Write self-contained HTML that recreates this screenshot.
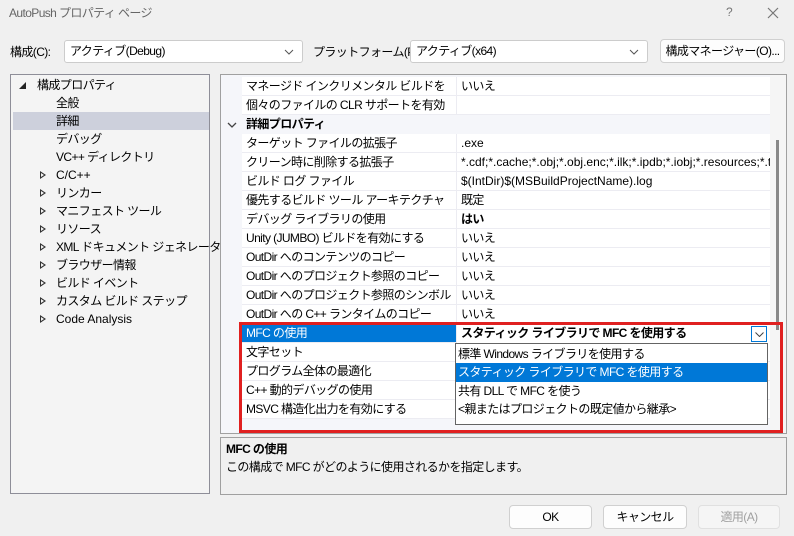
<!DOCTYPE html>
<html><head><meta charset="utf-8"><style>
*{box-sizing:border-box;margin:0;padding:0}
body{width:794px;height:536px;background:#f0f0f0;font-family:"Liberation Sans","Noto Sans CJK JP",sans-serif;font-size:12px;letter-spacing:-0.6px;color:#000;position:relative;overflow:hidden;line-height:16px}
.a{position:absolute;white-space:nowrap}
.combo{position:absolute;background:#fff;border:1px solid #ccc;border-radius:3px;height:23px;line-height:21px;padding-left:5px}
.chev{position:absolute;right:8px;top:8px}
.btn{position:absolute;background:#fdfdfd;border:1px solid #d0d0d0;border-radius:4px;text-align:center;line-height:22px;height:24px}
.tree div{position:absolute;left:0;white-space:nowrap;height:18px;line-height:18px}
.row{position:absolute;left:242px;width:528px;height:19px;border-bottom:1px solid #ececf2;line-height:18px;background:#fff}
.row .n{position:absolute;left:4px;width:210px;overflow:hidden}
.row .v{position:absolute;left:214px;border-left:1px solid #ececf2;padding-left:4px;width:314px;height:19px;overflow:hidden}
.t{position:absolute;left:29px;top:5px;width:0;height:0;border-left:6px solid #333;border-top:4px solid transparent;border-bottom:4px solid transparent}
.t::after{content:"";position:absolute;left:-5px;top:-2px;border-left:3px solid #f4f4f4;border-top:2px solid transparent;border-bottom:2px solid transparent}
.l{letter-spacing:0}
</style></head><body>
<div class="a" style="left:9px;top:5px;color:#666;font-size:12px">AutoPush プロパティ ページ</div>
<div class="a" style="left:726px;top:4px;color:#777">?</div>
<svg class="a" style="left:767px;top:7px" width="12" height="12"><path d="M1 1L11 11M11 1L1 11" stroke="#777" stroke-width="1.2"/></svg>

<div class="a" style="left:10px;top:44px">構成(C):</div>
<div class="combo" style="left:64px;top:40px;width:239px">アクティブ(Debug)<svg class="chev" width="10" height="6"><path d="M1 1L5 5L9 1" fill="none" stroke="#555"/></svg></div>
<div class="a" style="left:313px;top:44px">プラットフォーム(P):</div>
<div class="combo" style="left:410px;top:40px;width:238px">アクティブ(x64)<svg class="chev" width="10" height="6"><path d="M1 1L5 5L9 1" fill="none" stroke="#555"/></svg></div>
<div class="btn" style="left:660px;top:39px;width:125px">構成マネージャー(O)...</div>

<div class="a tree" style="left:10px;top:74px;width:200px;height:420px;background:#f4f4f4;border:1px solid #8e8e98">
<svg style="position:absolute;left:8px;top:7px" width="7" height="7"><path d="M7 0L7 7L0 7Z" fill="#222"/></svg><div style="top:1px;left:26px">構成プロパティ</div>
<div style="top:19px;left:45px">全般</div>
<div style="top:37px;left:2px;width:196px;background:#cdd0dc;padding-left:43px">詳細</div>
<div style="top:55px;left:45px">デバッグ</div>
<div style="top:73px;left:45px">VC++ ディレクトリ</div>
<div style="top:91px;left:0;width:200px"><span class="t"></span><span class="l" style="position:absolute;left:45px">C/C++</span></div>
<div style="top:109px;width:200px"><span class="t"></span><span style="position:absolute;left:45px">リンカー</span></div>
<div style="top:127px;width:200px"><span class="t"></span><span style="position:absolute;left:45px">マニフェスト ツール</span></div>
<div style="top:145px;width:200px"><span class="t"></span><span style="position:absolute;left:45px">リソース</span></div>
<div style="top:163px;width:200px"><span class="t"></span><span style="position:absolute;left:45px">XML ドキュメント ジェネレーター</span></div>
<div style="top:181px;width:200px"><span class="t"></span><span style="position:absolute;left:45px">ブラウザー情報</span></div>
<div style="top:199px;width:200px"><span class="t"></span><span style="position:absolute;left:45px">ビルド イベント</span></div>
<div style="top:217px;width:200px"><span class="t"></span><span style="position:absolute;left:45px">カスタム ビルド ステップ</span></div>
<div style="top:235px;width:200px"><span class="t"></span><span class="l" style="position:absolute;left:45px">Code Analysis</span></div>
</div>

<div class="a" style="left:220px;top:74px;width:567px;height:360px;background:#f5f6fa;border:1px solid #a0a0a0"></div>
<div class="a" style="left:770px;top:75px;width:16px;height:358px;background:#f5f5f5"></div>
<div class="a" style="left:776px;top:140px;width:3px;height:190px;background:#888"></div>

<div class="row" style="top:77px"><span class="n">マネージド インクリメンタル ビルドを有効にする</span><span class="v">いいえ</span></div>
<div class="row" style="top:96px"><span class="n">個々のファイルの CLR サポートを有効にする</span><span class="v"></span></div>
<div class="a" style="left:221px;top:115px;width:549px;height:19px;background:#f5f6fa;line-height:19px;font-weight:bold"><svg style="position:absolute;left:6px;top:7px" width="10" height="6"><path d="M1 1L5 5L9 1" fill="none" stroke="#444" stroke-width="1.3"/></svg><span style="position:absolute;left:25px">詳細プロパティ</span></div>
<div class="row" style="top:134px"><span class="n">ターゲット ファイルの拡張子</span><span class="v l">.exe</span></div>
<div class="row" style="top:153px"><span class="n">クリーン時に削除する拡張子</span><span class="v l">*.cdf;*.cache;*.obj;*.obj.enc;*.ilk;*.ipdb;*.iobj;*.resources;*.tlb</span></div>
<div class="row" style="top:172px"><span class="n">ビルド ログ ファイル</span><span class="v l">$(IntDir)$(MSBuildProjectName).log</span></div>
<div class="row" style="top:191px"><span class="n">優先するビルド ツール アーキテクチャ</span><span class="v">既定</span></div>
<div class="row" style="top:210px"><span class="n">デバッグ ライブラリの使用</span><span class="v" style="font-weight:bold">はい</span></div>
<div class="row" style="top:229px"><span class="n">Unity (JUMBO) ビルドを有効にする</span><span class="v">いいえ</span></div>
<div class="row" style="top:248px"><span class="n">OutDir へのコンテンツのコピー</span><span class="v">いいえ</span></div>
<div class="row" style="top:267px"><span class="n">OutDir へのプロジェクト参照のコピー</span><span class="v">いいえ</span></div>
<div class="row" style="top:286px"><span class="n">OutDir へのプロジェクト参照のシンボルのコピー</span><span class="v">いいえ</span></div>
<div class="row" style="top:305px"><span class="n">OutDir への C++ ランタイムのコピー</span><span class="v">いいえ</span></div>
<div class="row" style="top:324px;background:#0078d7;color:#fff"><span class="n">MFC の使用</span><span class="v" style="background:#fff;color:#000;font-weight:bold">スタティック ライブラリで MFC を使用する</span></div>
<div class="a" style="left:751px;top:326px;width:16px;height:16px;border:1px solid #0078d7;background:#fff"><svg style="position:absolute;left:3px;top:5px" width="9" height="5"><path d="M0.5 0.5L4.5 4.5L8.5 0.5" fill="none" stroke="#444"/></svg></div>
<div class="row" style="top:343px"><span class="n">文字セット</span></div>
<div class="row" style="top:362px"><span class="n">プログラム全体の最適化</span></div>
<div class="row" style="top:381px"><span class="n">C++ 動的デバッグの使用</span></div>
<div class="row" style="top:400px"><span class="n">MSVC 構造化出力を有効にする</span></div>

<div class="a" style="left:455px;top:343px;width:313px;height:82px;background:#fff;border:1px solid #646464;line-height:18px">
<div style="position:absolute;left:2px;top:1px">標準 Windows ライブラリを使用する</div>
<div style="position:absolute;left:0;top:19px;width:311px;height:19px;background:#0078d7;color:#fff;padding-left:2px">スタティック ライブラリで MFC を使用する</div>
<div style="position:absolute;left:2px;top:38px">共有 DLL で MFC を使う</div>
<div style="position:absolute;left:2px;top:56px">&lt;親またはプロジェクトの既定値から継承&gt;</div>
</div>

<div class="a" style="left:239px;top:322px;width:544px;height:111px;border:3px solid #e02020"></div>

<div class="a" style="left:220px;top:437px;width:567px;height:58px;background:#f0f0f0;border:1px solid #a0a0a0">
<div style="position:absolute;left:5px;top:3px;font-weight:bold">MFC の使用</div>
<div style="position:absolute;left:5px;top:21px">この構成で MFC がどのように使用されるかを指定します。</div>
</div>

<div class="btn" style="left:509px;top:505px;width:83px">OK</div>
<div class="btn" style="left:603px;top:505px;width:84px">キャンセル</div>
<div class="btn" style="left:698px;top:505px;width:82px;color:#a0a0a0;background:#f5f5f5;border-color:#e0e0e0">適用(A)</div>
</body></html>
